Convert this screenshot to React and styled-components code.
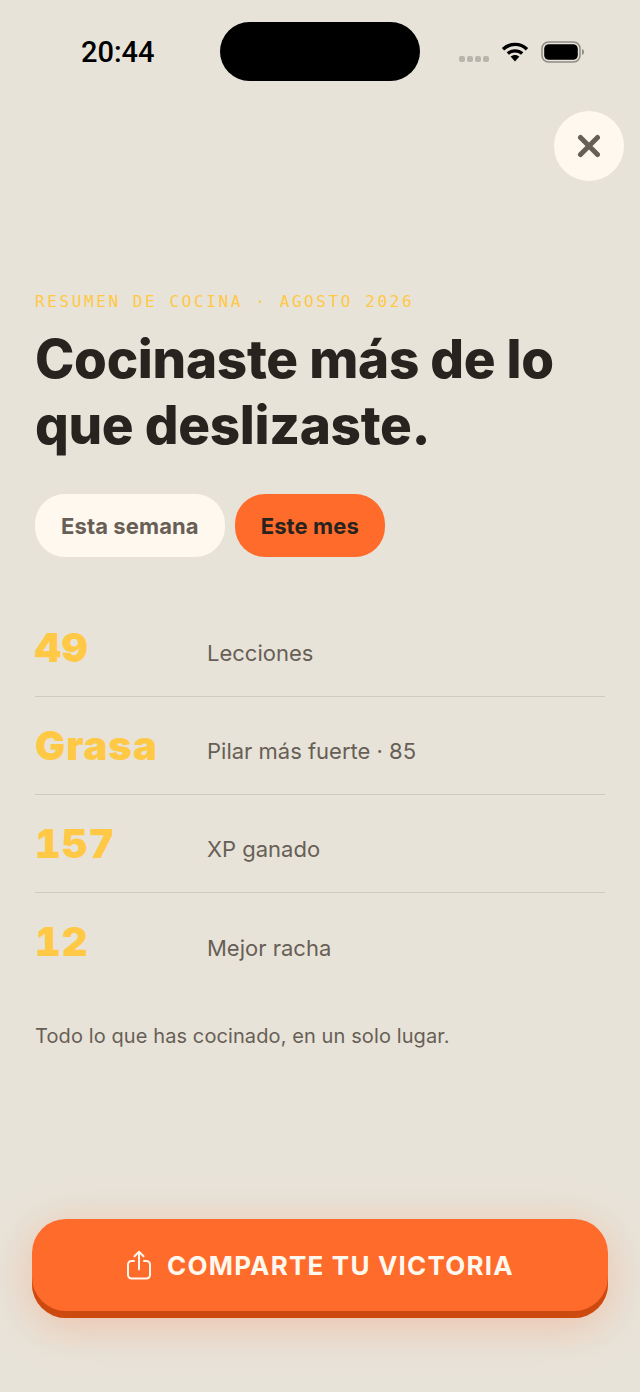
import React from "react";
import styled, { createGlobalStyle } from "styled-components";

const stats = [
  { value: "49", label: "Lecciones" },
  { value: "Grasa", label: "Pilar más fuerte · 85" },
  { value: "157", label: "XP ganado" },
  { value: "12", label: "Mejor racha" },
];

const WifiIcon = () => (
  <svg width="28" height="22" viewBox="0 0 28 22" fill="none">
    <path d="M2 8.2C8.8 1.8 19.2 1.8 26 8.2" stroke="#000" strokeWidth="3.4" />
    <path d="M6.8 12.6C10.9 8.9 17.1 8.9 21.2 12.6" stroke="#000" strokeWidth="3.4" />
    <path d="M9.6 15.6L14 20.6L18.4 15.6C15.8 13.4 12.2 13.4 9.6 15.6Z" fill="#000" />
  </svg>
);

const BatteryIcon = () => (
  <svg width="44" height="22" viewBox="0 0 44 22" fill="none">
    <rect x="1" y="1" width="38" height="20" rx="6.5" stroke="#8f8c85" strokeWidth="1.5" />
    <rect x="3.2" y="3.2" width="33.6" height="15.6" rx="4.6" fill="#000" />
    <path d="M41 8v6c1.4-.5 2-1.6 2-3s-.6-2.500-2-3Z" fill="#8f8c85" />
  </svg>
);

const CloseIcon = () => (
  <svg width="24" height="24" viewBox="0 0 24 24" fill="none">
    <path d="M3.500 3.500L20.500 20.500M20.500 3.500L3.500 20.500" stroke="#675f56" strokeWidth="5" strokeLinecap="round" />
  </svg>
);

const ShareIcon = () => (
  <svg width="26" height="30" viewBox="0 0 26 30" fill="none" stroke="#fff8ee" strokeWidth="2" strokeLinecap="round" strokeLinejoin="round">
    <path d="M8 11H5.500A3.500 3.500 0 0 0 2 14.500V25A3.500 3.500 0 0 0 5.500 28.500H20.500A3.500 3.500 0 0 0 24 25V14.500A3.500 3.500 0 0 0 20.500 11H18" />
    <path d="M13 19.500V2M8.500 6.200L13 1.800L17.500 6.200" />
  </svg>
);

const App = () => (
  <Page>
    <GlobalStyle />
    <StatusBar>
      <Time>20:44</Time>
      <Island />
      <StatusIcons>
        <SignalDots>
          <Dot />
          <Dot />
          <Dot />
          <Dot />
        </SignalDots>
        <WifiIcon />
        <BatteryIcon />
      </StatusIcons>
    </StatusBar>
    <CloseRow>
      <CloseButton aria-label="Cerrar">
        <CloseIcon />
      </CloseButton>
    </CloseRow>
    <Content>
      <Eyebrow>RESUMEN DE COCINA · AGOSTO 2026</Eyebrow>
      <Heading>
        Cocinaste más de lo
        <br />
        que deslizaste.
      </Heading>
      <Pills>
        <Pill>Esta semana</Pill>
        <Pill $active>Este mes</Pill>
      </Pills>
      <StatList>
        {stats.map((stat) => (
          <StatRow key={stat.label}>
            <StatValue>{stat.value}</StatValue>
            <StatLabel>{stat.label}</StatLabel>
          </StatRow>
        ))}
      </StatList>
      <Note>Todo lo que has cocinado, en un solo lugar.</Note>
    </Content>
    <ShareButton>
      <ShareIcon />
      COMPARTE TU VICTORIA
    </ShareButton>
  </Page>
);

const GlobalStyle = createGlobalStyle`
  html, body {
    margin: 0;
    padding: 0;
    background: #e8e3d9;
  }
`;

const Page = styled.div`
  width: 640px;
  height: 1392px;
  box-sizing: border-box;
  overflow: hidden;
  display: flex;
  flex-direction: column;
  padding-bottom: 74px;
  background: #e8e3d9;
  font-family: "Inter", "Liberation Sans", sans-serif;
`;

const StatusBar = styled.div`
  display: flex;
  align-items: center;
  height: 59px;
  margin-top: 22px;
  padding-left: 81px;
`;

const Time = styled.span`
  width: 139px;
  font-family: "Roboto", "Liberation Sans", sans-serif;
  font-size: 29px;
  font-weight: 500;
  color: #000;
`;

const Island = styled.div`
  width: 200px;
  height: 59px;
  border-radius: 30px;
  background: #000;
`;

const StatusIcons = styled.div`
  display: flex;
  align-items: center;
  gap: 12px;
  margin-left: 39px;
`;

const SignalDots = styled.div`
  display: flex;
  gap: 2px;
  margin-top: 14px;
`;

const Dot = styled.span`
  width: 6px;
  height: 6px;
  border-radius: 2px;
  background: #b9b5ad;
`;

const CloseRow = styled.div`
  display: flex;
  justify-content: flex-end;
  margin-top: 30px;
  padding-right: 16px;
`;

const CloseButton = styled.button`
  width: 70px;
  height: 70px;
  border: none;
  border-radius: 50%;
  padding: 0;
  display: flex;
  align-items: center;
  justify-content: center;
  background: #fff8ee;
`;

const Content = styled.div`
  display: flex;
  flex-direction: column;
  padding: 0 35px;
  margin-top: 110px;
`;

const Eyebrow = styled.div`
  font-family: "DejaVu Sans Mono", "Liberation Mono", monospace;
  font-size: 16px;
  line-height: 22px;
  letter-spacing: 2.6px;
  color: #ffc845;
`;

const Heading = styled.h1`
  margin: 13px 0 0;
  font-family: "Inter", "Liberation Sans", sans-serif;
  font-size: 53px;
  font-weight: 800;
  line-height: 66px;
  letter-spacing: -0.3px;
  color: #27231f;
`;

const Pills = styled.div`
  display: flex;
  gap: 10px;
  margin-top: 36px;
`;

const Pill = styled.div`
  height: 63px;
  box-sizing: border-box;
  padding: 0 26px;
  display: flex;
  align-items: center;
  border-radius: 30px;
  font-size: 22px;
  font-weight: 700;
  letter-spacing: 0.1px;
  background: ${(p) => (p.$active ? "#ff6b2a" : "#fff8ee")};
  color: ${(p) => (p.$active ? "#27231f" : "#675f56")};
`;

const StatList = styled.div`
  display: flex;
  flex-direction: column;
  margin-top: 42px;
`;

const StatRow = styled.div`
  display: flex;
  align-items: center;
  height: 98px;
  box-sizing: border-box;
  border-bottom: 1px solid #cfcabf;

  &:last-child {
    border-bottom: none;
  }
`;

const StatValue = styled.span`
  width: 172px;
  font-family: "Inter", "Liberation Sans", sans-serif;
  font-size: 40px;
  font-weight: 900;
  font-variant-numeric: tabular-nums;
  letter-spacing: 1px;
  color: #ffc845;
  margin-top: -1px;
`;

const StatLabel = styled.span`
  font-size: 22px;
  color: #675f56;
  margin-top: 11px;
`;

const Note = styled.p`
  margin: 31px 0 0;
  font-size: 20px;
  line-height: 28px;
  letter-spacing: 0.1px;
  color: #675f56;
`;

const ShareButton = styled.button`
  margin: auto 32px 0;
  height: 99px;
  box-sizing: border-box;
  padding: 0 0 7px;
  border: none;
  border-radius: 34px;
  display: flex;
  align-items: center;
  justify-content: center;
  gap: 15px;
  font-family: "Inter", "Liberation Sans", sans-serif;
  font-size: 26px;
  font-weight: 700;
  letter-spacing: 1.2px;
  color: #fff8ee;
  background: #ff6b2a;
  box-shadow: inset 0 -7px 0 #cc4a10, 0 8px 44px rgba(255, 107, 42, 0.28);
`;

export default App;
